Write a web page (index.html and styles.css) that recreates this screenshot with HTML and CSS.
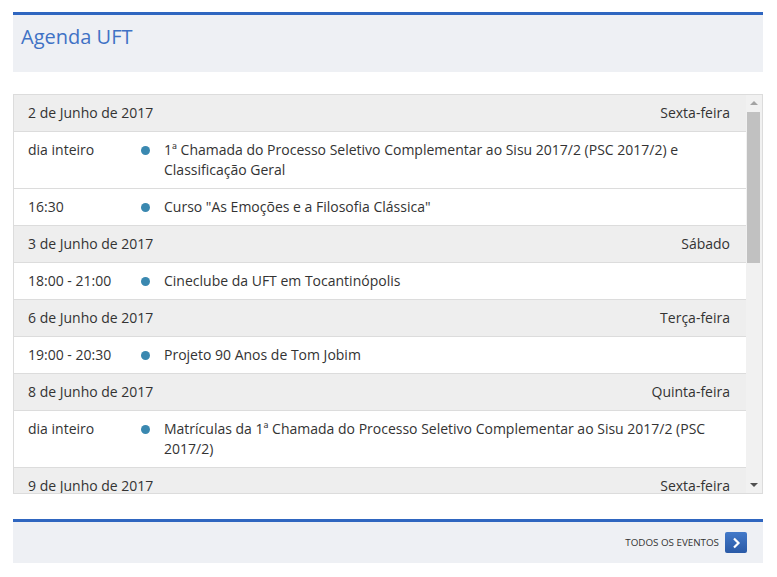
FILE: index.html
```html
<!DOCTYPE html>
<html lang="pt-BR">
<head>
    <meta charset="UTF-8">
    <title>Agenda UFT</title>
    <link rel="stylesheet" href="styles.css">
</head>
<body>
    <div class="agenda-header">Agenda UFT</div>
    <div class="agenda-list">
        <div class="agenda-items">
            <div class="day-row"><span>2 de Junho de 2017</span><span>Sexta-feira</span></div>
            <div class="event-row">
                <span class="event-time">dia inteiro</span>
                <span class="event-dot"></span>
                <span class="event-title">1ª Chamada do Processo Seletivo Complementar ao Sisu 2017/2 (PSC 2017/2) e Classificação Geral</span>
            </div>
            <div class="event-row">
                <span class="event-time">16:30</span>
                <span class="event-dot"></span>
                <span class="event-title">Curso "As Emoções e a Filosofia Clássica"</span>
            </div>
            <div class="day-row"><span>3 de Junho de 2017</span><span>Sábado</span></div>
            <div class="event-row">
                <span class="event-time">18:00 - 21:00</span>
                <span class="event-dot"></span>
                <span class="event-title">Cineclube da UFT em Tocantinópolis</span>
            </div>
            <div class="day-row"><span>6 de Junho de 2017</span><span>Terça-feira</span></div>
            <div class="event-row">
                <span class="event-time">19:00 - 20:30</span>
                <span class="event-dot"></span>
                <span class="event-title">Projeto 90 Anos de Tom Jobim</span>
            </div>
            <div class="day-row"><span>8 de Junho de 2017</span><span>Quinta-feira</span></div>
            <div class="event-row">
                <span class="event-time">dia inteiro</span>
                <span class="event-dot"></span>
                <span class="event-title">Matrículas da 1ª Chamada do Processo Seletivo Complementar ao Sisu 2017/2 (PSC 2017/2)</span>
            </div>
            <div class="day-row"><span>9 de Junho de 2017</span><span>Sexta-feira</span></div>
        </div>
        <div class="scrollbar">
            <svg class="scroll-arrow" width="16" height="16" viewBox="0 0 16 16"><path d="M4 10 L8 6 L12 10 Z" fill="#a3a3a3"/></svg>
            <div class="scroll-track"><div class="scroll-thumb"></div></div>
            <svg class="scroll-arrow" width="16" height="16" viewBox="0 0 16 16"><path d="M4 6 L12 6 L8 10 Z" fill="#505050"/></svg>
        </div>
    </div>
    <div class="agenda-footer">
        <a class="all-events" href="#">Todos os eventos</a>
        <a class="all-events-btn" href="#">
            <svg width="10" height="12" viewBox="0 0 10 12"><path d="M3 1.5 L7.5 6 L3 10.5" fill="none" stroke="#fff" stroke-width="2.2"/></svg>
        </a>
    </div>
</body>
</html>
```

FILE: styles.css
```css
body {
    margin: 12px 14px 0 13px;
    width: 750px;
    font-family: "Open Sans", Arial, sans-serif;
    font-size: 14px;
    color: #333;
    background-color: #fff;
}

.agenda-header {
    border-top: 3px solid #2f66c0;
    background-color: #eef0f4;
    height: 60px;
    padding: 8px 0 0 8px;
    box-sizing: border-box;
    font-size: 20px;
    line-height: 28px;
    color: #3f72c5;
}

.agenda-list {
    margin-top: 22px;
    height: 400px;
    border: 1px solid #dcdcdc;
    box-sizing: border-box;
    display: flex;
}
.agenda-items {
    flex: 1;
    overflow: hidden;
}

.scrollbar {
    width: 16px;
    background-color: #f1f1f1;
    display: flex;
    flex-direction: column;
}
.scroll-arrow {
    display: block;
    flex-shrink: 0;
}
.scroll-track {
    flex: 1;
}
.scroll-thumb {
    height: 151px;
    margin: 1px 2px 0 1px;
    background-color: #c1c1c1;
}

.day-row {
    display: flex;
    justify-content: space-between;
    padding: 8px 16px 8px 14px;
    line-height: 20px;
    background-color: #eeeeee;
    border-bottom: 1px solid #dcdcdc;
}
.event-row {
    display: flex;
    align-items: flex-start;
    padding: 8px 16px 8px 14px;
    line-height: 20px;
    border-bottom: 1px solid #dcdcdc;
}
.event-time {
    width: 113px;
    flex-shrink: 0;
}
.event-dot {
    width: 9px;
    height: 9px;
    border-radius: 50%;
    background-color: #3a88b0;
    margin: 6px 14px 0 0;
    flex-shrink: 0;
}
.event-title {
    flex: 1;
}

.agenda-footer {
    margin-top: 25px;
    border-top: 3px solid #2f66c0;
    background-color: #eef0f4;
    height: 41px;
    display: flex;
    align-items: center;
    justify-content: flex-end;
    padding-right: 16px;
}
.all-events {
    font-size: 9.8px;
    text-transform: uppercase;
    color: #333;
    text-decoration: none;
    margin-right: 6px;
}
.all-events-btn {
    width: 22px;
    height: 21px;
    border-radius: 2px;
    background: linear-gradient(#4379c9, #2a5aa6);
    display: flex;
    align-items: center;
    justify-content: center;
}
```
